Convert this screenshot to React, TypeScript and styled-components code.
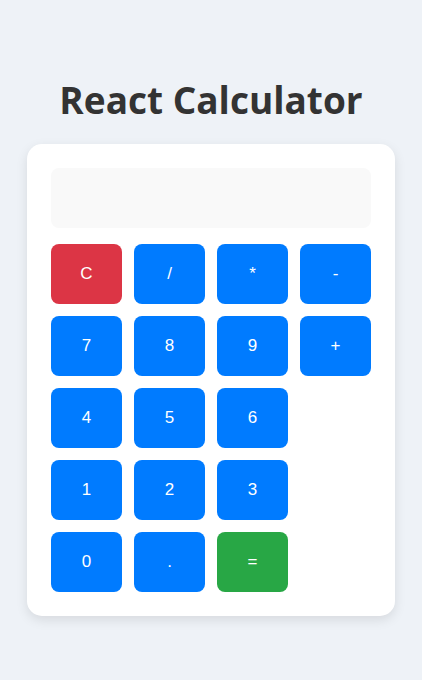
import React from "react";
import styled, { createGlobalStyle } from "styled-components";

const Global = createGlobalStyle`
  html, body { margin: 0; padding: 0; background: #eef2f7; }
  body { font-family: "Liberation Sans", Arial, sans-serif; }
`;

const Page = styled.div`
  display: flex;
  flex-direction: column;
  align-items: center;
  padding-top: 77px;
  min-height: 680px;
  box-sizing: border-box;
`;

const Title = styled.h1`
  margin: 0 0 22px;
  font-family: "Open Sans", "Noto Sans", sans-serif;
  font-weight: 700;
  font-size: 37px;
  line-height: 45px;
  color: #333333;
`;

const Card = styled.div`
  background: #ffffff;
  border-radius: 15px;
  padding: 24px;
  width: 320px;
  box-shadow: 0 4px 12px rgba(0, 0, 0, 0.1);
  display: flex;
  flex-direction: column;
  gap: 16px;
`;

const Display = styled.div`
  height: 60px;
  background: #f9f9f9;
  border-radius: 8px;
`;

const Grid = styled.div`
  display: grid;
  grid-template-columns: repeat(4, 1fr);
  gap: 12px;
`;

type Variant = "num" | "clear" | "equal";

const Key = styled.button<{ $variant: Variant }>`
  height: 60px;
  border: none;
  border-radius: 8px;
  color: #ffffff;
  font-family: "Liberation Sans", Arial, sans-serif;
  font-size: 17px;
  padding: 0;
  background: ${(p) =>
    p.$variant === "clear" ? "#dc3545" : p.$variant === "equal" ? "#28a745" : "#007bff"};
  cursor: pointer;
`;

const Empty = styled.div``;

const rows: (string | null)[][] = [
  ["C", "/", "*", "-"],
  ["7", "8", "9", "+"],
  ["4", "5", "6", null],
  ["1", "2", "3", null],
  ["0", ".", "=", null],
];

export default function App() {
  return (
    <>
      <Global />
      <Page>
        <Title>React Calculator</Title>
        <Card>
          <Display />
          <Grid>
            {rows.flat().map((k, i) =>
              k === null ? (
                <Empty key={i} />
              ) : (
                <Key key={i} $variant={k === "C" ? "clear" : k === "=" ? "equal" : "num"}>
                  {k}
                </Key>
              )
            )}
          </Grid>
        </Card>
      </Page>
    </>
  );
}
